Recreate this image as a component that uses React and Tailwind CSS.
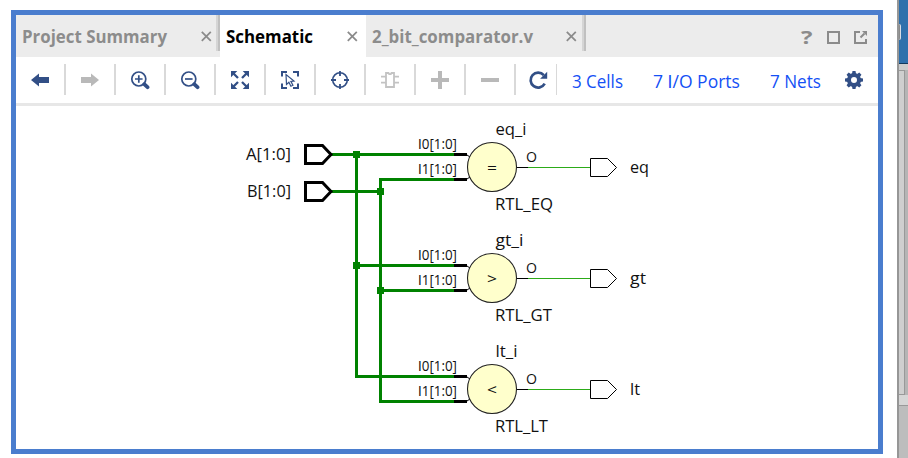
const NAVY = '#324f86';
const GREY = '#b9b9b9';

function CloseMark() {
  return (
    <svg className="h-[11px] w-[11px] shrink-0" viewBox="0 0 11 11" stroke="#8b8b8b" strokeWidth="1.8">
      <path d="M0.8 0.8 9.800 9.800M9.800 0.8 0.8 9.800" />
    </svg>
  );
}

function TabEdge() {
  return <div className="h-9 w-1 shrink-0 border-l-2 border-[#d5d5d5] bg-[#c0c0c0]" />;
}

// The capital I is set in a face without slab serifs.
function plainCapitalI(text) {
  return text.split(/(I)/).map((part, index) =>
    part === 'I' ? <tspan key={index} fontFamily='"Liberation Sans", sans-serif'>I</tspan> : part
  );
}

function Label({ width, color, bold, children, size }) {
  return (
    <svg className="h-7 shrink-0 overflow-visible" style={{ width }} fontFamily='"Open Sans", "Noto Sans", sans-serif'>
      <text x="0" y="20" fontSize={size} fontWeight={bold ? 700 : 400} fill={color} textLength={width} lengthAdjust="spacingAndGlyphs">
        {plainCapitalI(children)}
      </text>
    </svg>
  );
}

function Icon({ children, stroke = 'none', fill = 'none', width = 1.7 }) {
  return (
    <svg className="h-5 w-5" viewBox="0 0 20 20" stroke={stroke} fill={fill} strokeWidth={width}>
      {children}
    </svg>
  );
}

const tools = [
  <Icon fill={NAVY}><path d="M1 10 9 3.5V7h10v6H9v3.5z" /></Icon>,
  <Icon fill={GREY}><path d="M19 10 11 3.5V7H1v6h10v3.5z" /></Icon>,
  <Icon stroke={NAVY}>
    <circle cx="8.8" cy="9" r="7" /><path d="M5 9h7.600M8.800 5.200v7.600" />
    <path d="m14.200 14.200 3.300 3" strokeWidth="3.800" strokeLinecap="round" />
  </Icon>,
  <Icon stroke={NAVY}>
    <circle cx="8.8" cy="9" r="7" /><path d="M5 9h7.600" />
    <path d="m14.200 14.200 3.300 3" strokeWidth="3.800" strokeLinecap="round" />
  </Icon>,
  <Icon fill={NAVY} stroke={NAVY} width={2.3}>
    <path d="m3 3 5 5M17 3l-5 5M3 17l5-5M17 17l-5-5" />
    <path stroke="none" d="M1 1h6.300L1 7.300zM19 1v6.300L12.700 1zM1 19v-6.300L7.300 19zM19 19h-6.300l6.300-6.300z" />
  </Icon>,
  <Icon stroke={NAVY} width={2}>
    <path d="M2 6.500V2h5M13 2h5v4.500M2 13.500V18h5M18 13.500V18h-5" />
    <path d="m6 4.500.5 10 2.400-2.300 2 4 2-1-2-3.800 3.100-.4z" strokeWidth="1.200" />
  </Icon>,
  <Icon stroke={NAVY} width={1.6}>
    <circle cx="10" cy="10" r="7.300" />
    <path d="M10 1v5M10 14v5M1 10h5M14 10h5" strokeWidth="1.800" />
  </Icon>,
  <Icon stroke="#c3c3c3" width={1.8}>
    <path d="M6 3h2.500l.7 1.200h1.600L11.500 3H14v14H6zM1 6.700h5M1 12.700h5M14 6.700h5M14 12.700h5" />
  </Icon>,
  <Icon fill={GREY}><path d="M8 1h4v7h7v4h-7v7H8v-7H1V8h7z" /></Icon>,
  <Icon fill={GREY}><path d="M1 8h18v4H1z" /></Icon>,
];

function RefreshIcon() {
  return (
    <svg className="h-5 w-5" viewBox="0 0 20 20" fill="none">
      <path d="M15.800 5.200A7.500 7.500 0 1 0 16.700 13.700" stroke={NAVY} strokeWidth="2.700" />
      <path d="M19.200 1.700v7.100h-7.100z" fill={NAVY} />
    </svg>
  );
}

function GearIcon() {
  const teeth = [0, 45, 90, 135, 180, 225, 270, 315];
  return (
    <svg className="h-5 w-5" viewBox="0 0 20 20" fill={NAVY}>
      {teeth.map((angle) => (
        <path key={angle} d="M7.900 4 8.500 1h3l.6 3z" transform={`rotate(${angle} 10 10)`} />
      ))}
      <circle cx="10" cy="10" r="5" fill="none" stroke={NAVY} strokeWidth="4" />
    </svg>
  );
}

function DiagramText({ x, y, width, size = 17, children }) {
  return (
    <text x={x} y={y} fontSize={size} textLength={width} lengthAdjust="spacingAndGlyphs" fill="#111111">
      {plainCapitalI(children)}
    </text>
  );
}

const gates = [
  { y: 167, op: '=', name: 'eq_i', nameW: 31, type: 'RTL_EQ', typeW: 58, out: 'eq', outW: 19 },
  { y: 278, op: '>', name: 'gt_i', nameW: 28, type: 'RTL_GT', typeW: 57, out: 'gt', outW: 16 },
  { y: 389, op: '<', name: 'lt_i', nameW: 22, type: 'RTL_LT', typeW: 53, out: 'lt', outW: 10 },
];

function Gate({ y, op, name, nameW, type, typeW, out, outW }) {
  return (
    <g>
      <path d={`M454 ${y - 12.5}h13M454 ${y + 12.5}h13`} stroke="#000" strokeWidth="3" />
      <path d={`M467 ${y - 12}l3 2M467 ${y + 12}l3-2`} stroke="#000" />
      <circle cx="492" cy={y} r="24.500" fill="#ffffcc" stroke="#222" strokeWidth="1.100" />
      <path d={`M517 ${y + 0.5}h11`} stroke="#000" />
      <path d={`M528 ${y + 0.5}h62`} stroke="#2cab18" />
      <path d={`M590.500 ${y - 8.5}h17l9 9-9 9h-17z`} fill="#fff" stroke="#000" />
      <DiagramText x={418} y={y - 18.5} width={39} size={14.2}>I0[1:0]</DiagramText>
      <DiagramText x={418} y={y + 6.5} width={39} size={14.2}>I1[1:0]</DiagramText>
      <DiagramText x={495.5} y={y - 32} width={nameW}>{name}</DiagramText>
      <DiagramText x={495} y={y + 42.5} width={typeW}>{type}</DiagramText>
      <DiagramText x={526} y={y - 5} width={11} size={14.5}>O</DiagramText>
      <DiagramText x={487} y={y + 6} width={10} size={15}>{op}</DiagramText>
      <DiagramText x={630} y={y + 6} width={outW}>{out}</DiagramText>
    </g>
  );
}

function Schematic() {
  return (
    <svg className="block h-[343px] w-[862px]" viewBox="16 106 862 343" fill="none" fontFamily='"Open Sans", "Noto Sans", sans-serif'>
      <g stroke="#008200" strokeWidth="3">
        <path d="M331 154.500h123M356.500 154.500v222H454M356.500 265.500H454" />
        <path d="M331 191.500h49.500M454 179.500h-73.500v222H454M380.500 290.500H454" />
      </g>
      <g fill="#008200">
        <path d="M353 151h7v7h-7zM377 188h7v7h-7zM353 262h7v7h-7zM377 287h7v7h-7z" />
      </g>
      <g stroke="#000" strokeWidth="3">
        <path d="M305.500 145.500h17l8.500 9-8.500 9h-17z" />
        <path d="M305.500 182.500h17l8.500 9-8.500 9h-17z" />
      </g>
      <DiagramText x={246} y={160} width={45}>A[1:0]</DiagramText>
      <DiagramText x={247} y={197} width={44}>B[1:0]</DiagramText>
      {gates.map((gate) => <Gate key={gate.op} {...gate} />)}
    </svg>
  );
}

export default function App() {
  return (
    <div className="flex h-[458px] w-[908px] overflow-hidden bg-white">
      <main className="mt-[10px] ml-[11px] h-[444px] w-[872px] shrink-0 border-[5px] border-[#4a7dce] bg-white">
        <header className="flex h-[42px] bg-[#ececec]">
          <div className="flex w-[204px] pl-[6px]">
            <div className="mt-2"><Label width={145} size={18} color="#8c8c8c" bold>Project Summary</Label></div>
            <div className="mt-4 ml-[34px]"><CloseMark /></div>
            <div className="ml-auto"><TabEdge /></div>
          </div>
          <div className="flex w-[146px] bg-white pl-[6px]">
            <div className="mt-2"><Label width={87} size={18} color="#000000" bold>Schematic</Label></div>
            <div className="mt-4 ml-[34px]"><CloseMark /></div>
          </div>
          <div className="flex w-[220px] pl-[6px]">
            <div className="mt-2"><Label width={161} size={18} color="#8c8c8c" bold>2_bit_comparator.v</Label></div>
            <div className="mt-4 ml-[33px]"><CloseMark /></div>
            <div className="ml-auto"><TabEdge /></div>
          </div>
          <div className="ml-auto flex items-start pt-[15px] pr-[11px]">
            <div className="-mt-[6px]"><Label width={11.5} size={18} color="#8b8b8b" bold>?</Label></div>
            <svg className="mt-px ml-[15px] h-[13px] w-[13px]" viewBox="0 0 13 13" fill="none" stroke="#8b8b8b" strokeWidth="2">
              <path d="M1 1h11v11H1z" />
            </svg>
            <svg className="mt-px ml-[14px] h-[13px] w-[13px]" viewBox="0 0 13 13" fill="none" stroke="#8b8b8b" strokeWidth="2">
              <path d="M6 1H1v11h11V8M6.500 6.500l4-4" />
              <path d="M8 0h5v5z" fill="#8b8b8b" stroke="none" />
            </svg>
          </div>
        </header>
        <nav className="flex h-[49px] border-b-[3px] border-[#e7e7e7] pt-[7px]">
          {tools.map((tool, index) => (
            <div key={index} className="flex h-[31px] w-[50px] shrink-0 items-center justify-center border-r-2 border-[#d9d9d9]">
              {tool}
            </div>
          ))}
          <div className="flex h-[31px] w-[41px] shrink-0 items-center border-r border-[#d9d9d9] pl-[12px]">
            <RefreshIcon />
          </div>
          <div className="flex items-start pt-1 pl-[15px]">
            <Label width={51} size={18} color="#1450f5">3 Cells</Label>
            <div className="w-[30px]" />
            <Label width={87} size={18} color="#1450f5">7 I/O Ports</Label>
            <div className="w-[30px]" />
            <Label width={51} size={18} color="#1450f5">7 Nets</Label>
          </div>
          <div className="ml-[23px] flex h-[31px] items-center"><GearIcon /></div>
        </nav>
        <Schematic />
      </main>
      <aside className="ml-auto flex h-full w-[11px] border-l-2 border-[#969696] bg-[#b5b5b5]">
        <div className="flex w-full flex-col">
          <div className="h-16 border-b border-[#123a5e] bg-[#2f70ac] pt-6">
            <div className="h-4 w-[2px] rounded-r border-r border-[#d8dce5] bg-[#8a8a8a]" />
          </div>
          <div className="h-[6px] bg-[#cccccc]" />
          <div className="h-[325px] w-[6px] border-t border-r border-b border-[#999999] bg-[#cfcfcf]" />
          <div className="h-[11px] border-b border-[#999999] bg-[#d6d6d6]" />
          <div className="grow bg-[#bdbdbd]" />
        </div>
      </aside>
    </div>
  );
}
